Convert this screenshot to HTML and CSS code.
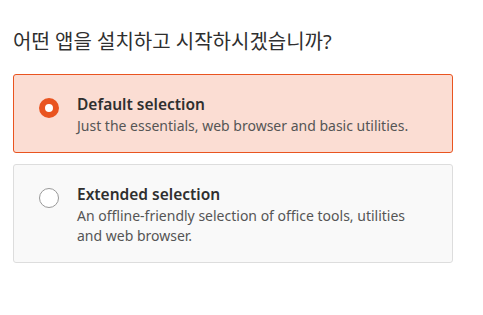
FILE: index.html
```html
<!DOCTYPE html>
<html lang="ko">
<head>
  <meta charset="UTF-8" />
  <title>앱 선택</title>
  <link rel="stylesheet" href="styles.css">
</head>
<body>
  <main class="page">
    <h1 class="question">어떤 앱을 설치하고 시작하시겠습니까?</h1>

    <div class="options">
      <label class="option selected">
        <span class="radio"></span>
        <span class="option-text">
          <span class="option-title">Default selection</span>
          <span class="option-desc">Just the essentials, web browser and basic utilities.</span>
        </span>
      </label>

      <label class="option">
        <span class="radio"></span>
        <span class="option-text">
          <span class="option-title">Extended selection</span>
          <span class="option-desc">An offline-friendly selection of office tools, utilities and web browser.</span>
        </span>
      </label>
    </div>
  </main>
</body>
</html>
```

FILE: styles.css
```css
:root {
  --orange: #e95420;
  --orange-light: #fbddd3;
  --gray-bg: #f9f9f9;
  --gray-border: #dddddd;
  --text: #333333;
  --text-muted: #555555;
}

* {
  margin: 0;
  padding: 0;
  box-sizing: border-box;
}

body {
  font-family: 'Noto Sans', 'Noto Sans CJK KR', sans-serif;
  background: #ffffff;
  color: var(--text);
}

.page {
  padding: 28px 30px 0 13px;
}

.question {
  font-size: 20px;
  font-weight: 400;
  line-height: 28px;
  color: #2f2f2f;
}

.options {
  margin-top: 18px;
  display: flex;
  flex-direction: column;
  gap: 11px;
}

.option {
  display: flex;
  align-items: flex-start;
  gap: 18px;
  padding: 19px 24px 16px 25px;
  border: 1px solid var(--gray-border);
  border-radius: 3px;
  background: var(--gray-bg);
}

.option.selected {
  background: var(--orange-light);
  border-color: var(--orange);
}

.radio {
  flex: none;
  width: 20px;
  height: 20px;
  margin-top: 4px;
  border: 1px solid #999999;
  border-radius: 50%;
  background: #ffffff;
}

.option.selected .radio {
  border: 6px solid var(--orange);
}

.option-text {
  display: flex;
  flex-direction: column;
  gap: 2px;
}

.option-title {
  font-size: 15.5px;
  font-weight: 600;
  line-height: 20px;
  color: #2f2f2f;
}

.option-desc {
  font-size: 14px;
  line-height: 20px;
  color: var(--text-muted);
}
```
